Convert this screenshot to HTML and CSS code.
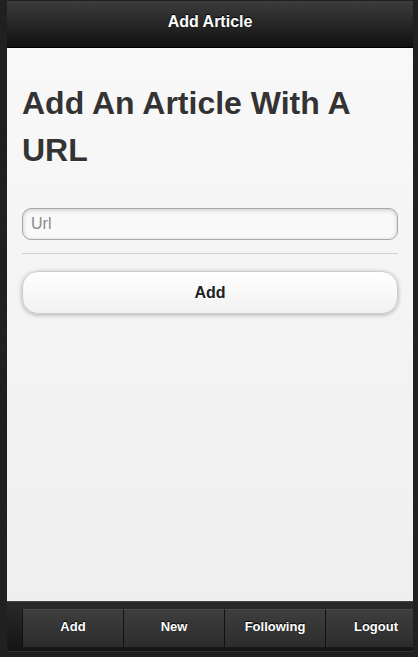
FILE: index.html
```html
<!DOCTYPE html>
<html>
<head>
<meta charset="utf-8">
<link rel="stylesheet" href="styles.css">
<title>Add Article</title>
</head>
<body>
<div class="page">
  <header class="header">
    <h1 class="header-title">Add Article</h1>
  </header>
  <main class="content">
    <h2 class="title">Add An Article With A URL</h2>
    <form class="form">
      <input class="url-input" type="text" placeholder="Url">
      <hr class="rule">
      <button class="add-btn" type="button">Add</button>
    </form>
  </main>
  <footer class="footer">
    <nav class="navbar">
      <a class="nav-item">Add</a>
      <a class="nav-item">New</a>
      <a class="nav-item">Following</a>
      <a class="nav-item">Logout</a>
    </nav>
  </footer>
</div>
</body>
</html>
```
FILE: styles.css
```css
html, body {
  margin: 0;
  padding: 0;
  height: 100%;
}
body {
  background: #1f1f1f;
  background-image: repeating-linear-gradient(45deg, rgba(255,255,255,0.02) 0 1px, transparent 1px 3px);
  font-family: "Liberation Sans", Arial, sans-serif;
  overflow: hidden;
}
.page {
  margin: 1px 5px 0 7px;
  height: 651px;
  display: flex;
  flex-direction: column;
  background: linear-gradient(#f9f9f9, #eeeeee);
}
.header {
  height: 46px;
  flex: none;
  background: linear-gradient(#3c3c3c, #111111);
  border-bottom: 1px solid #000;
  display: flex;
  align-items: center;
  justify-content: center;
}
.header-title {
  margin: 0;
  color: #fff;
  font-size: 16px;
  font-weight: bold;
  text-shadow: 0 -1px 1px #000;
  padding-bottom: 4px;
}
.content {
  flex: 1;
  padding: 0 15px;
}
.title {
  margin: 32px 0 0;
  font-size: 32px;
  line-height: 47px;
  font-weight: bold;
  color: #333;
  text-shadow: 0 1px 0 #fff;
}
.form {
  margin-top: 34px;
  display: flex;
  flex-direction: column;
}
.url-input {
  box-sizing: border-box;
  width: 100%;
  height: 32px;
  margin: 0;
  padding: 0 8px;
  border: 1px solid #a8a8a8;
  border-radius: 9px;
  background: #f9f9f9;
  box-shadow: inset 0 1px 4px rgba(0,0,0,0.2);
  font-family: "Liberation Sans", Arial, sans-serif;
  font-size: 16px;
  color: #333;
  outline: none;
}
.url-input::placeholder {
  color: #8a8a8a;
}
.rule {
  margin: 13px 0 17px;
  border: 0;
  border-top: 1px solid #d2d2d2;
  height: 0;
}
.add-btn {
  box-sizing: border-box;
  width: 100%;
  height: 43px;
  margin: 0;
  border: 1px solid #cccccc;
  border-radius: 16px;
  background: linear-gradient(#ffffff, #f1f1f1);
  box-shadow: 0 1px 4px rgba(0,0,0,0.3);
  font-family: "Liberation Sans", Arial, sans-serif;
  font-size: 16px;
  font-weight: bold;
  color: #222;
  text-shadow: 0 1px 0 #fff;
}
.footer {
  flex: none;
  height: 51px;
  box-sizing: border-box;
  background: linear-gradient(#2a2a2a, #151515);
  border-top: 1px solid #444;
  border-bottom: 1px solid #333;
  padding: 7px 0 0 15px;
  overflow: hidden;
}
.navbar {
  display: flex;
  width: 408px;
}
.nav-item {
  flex: none;
  width: 101px;
  height: 38px;
  box-sizing: border-box;
  display: flex;
  align-items: center;
  justify-content: center;
  background: linear-gradient(#3e3e3e, #2c2c2c);
  border-left: 1px solid #111;
  border-top: 1px solid #4a4a4a;
  color: #fff;
  font-size: 13px;
  font-weight: bold;
  text-shadow: 0 -1px 1px #000;
  padding-bottom: 5px;
}
```
